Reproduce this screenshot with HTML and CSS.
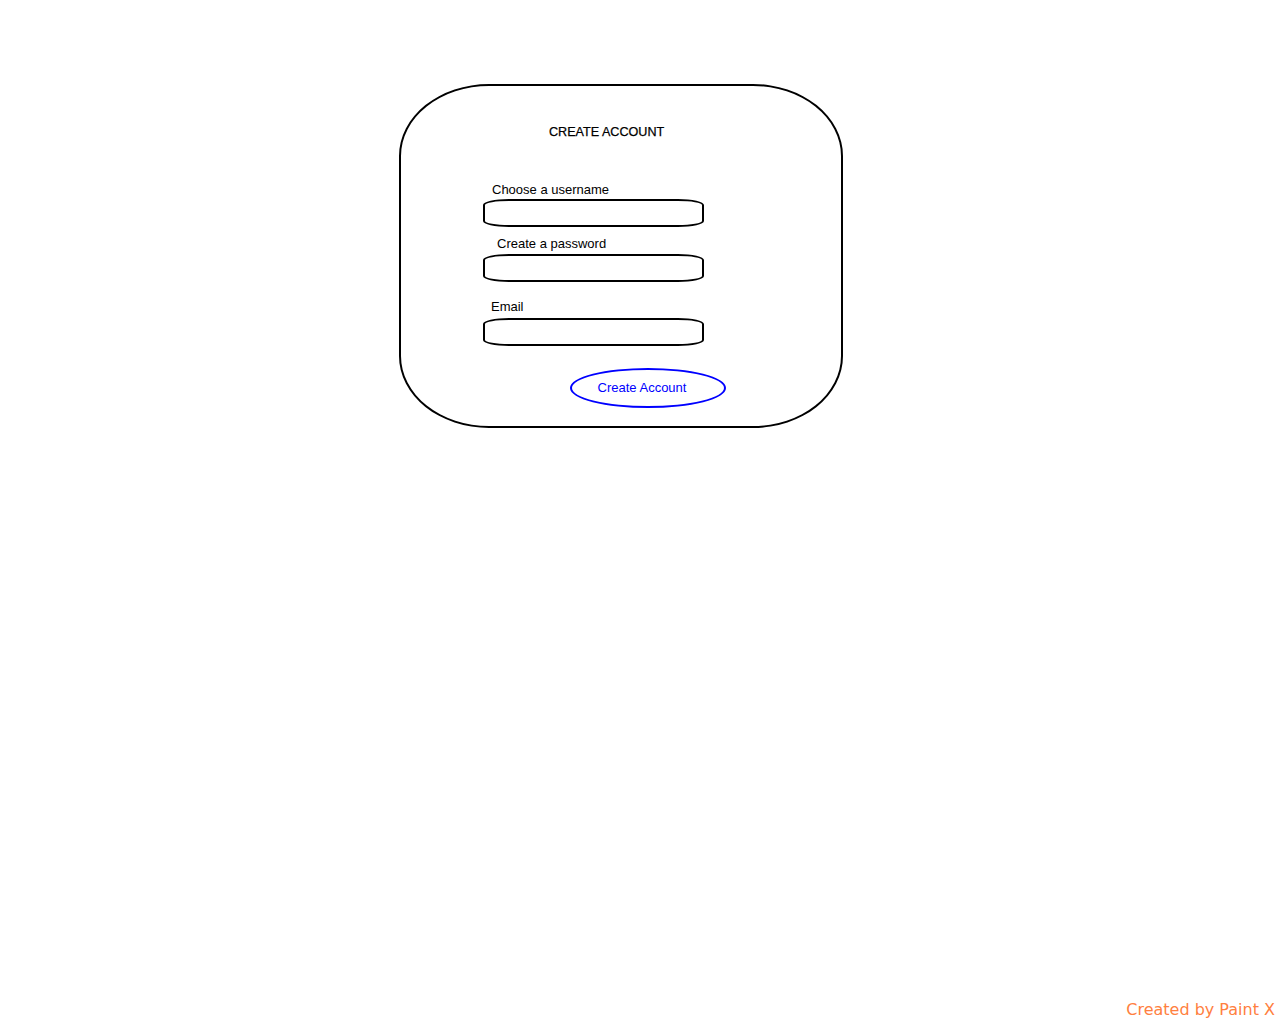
FILE: index.html
```html
<!DOCTYPE html>
<html>
<head>
<meta charset="utf-8">
<link rel="stylesheet" href="styles.css">
</head>
<body>
<div class="page">
  <form class="card">
    <div class="title">CREATE ACCOUNT</div>
    <div class="fields">
      <label class="label label-user">Choose a username</label>
      <div class="input"></div>
      <label class="label label-pass">Create a password</label>
      <div class="input"></div>
      <label class="label label-email">Email</label>
      <div class="input"></div>
    </div>
    <div class="actions">
      <div class="btn">Create Account</div>
    </div>
  </form>
</div>
<div class="footer">Created by Paint X</div>
</body>
</html>
```
FILE: styles.css
```css
html, body {
  margin: 0;
  padding: 0;
  background: #fff;
}
body {
  width: 1280px;
  height: 1024px;
  position: relative;
  font-family: "Liberation Sans", Arial, sans-serif;
  color: #000;
}
.page {
  padding: 84px 0 0 399px;
}
.card {
  box-sizing: border-box;
  width: 444px;
  height: 344px;
  border: 2px solid #000;
  border-radius: 90px / 72px;
  padding: 38px 0 0 82px;
  display: flex;
  flex-direction: column;
  margin: 0;
}
.title {
  font-size: 12.6px;
  line-height: 16px;
  margin-left: 66px;
  -webkit-text-stroke: 0.25px #000;
}
.fields {
  display: flex;
  flex-direction: column;
  margin-top: 41px;
}
.label {
  font-size: 13px;
  line-height: 16px;
  display: block;
  padding-top: 1px;
}
.label-user { padding-left: 9px; margin-bottom: 1px; }
.label-pass { padding-left: 14px; margin-top: 8px; margin-bottom: 2px; }
.label-email { padding-left: 8px; margin-top: 16px; margin-bottom: 3px; }
.input {
  box-sizing: border-box;
  width: 221px;
  height: 28px;
  border: 2px solid #000;
  border-radius: 26px / 6px;
}
.actions {
  margin-top: 22px;
  padding-left: 87px;
}
.btn {
  box-sizing: border-box;
  width: 156px;
  height: 40px;
  border: 2px solid #0000ff;
  border-radius: 50%;
  color: #0000ff;
  font-size: 13px;
  display: flex;
  align-items: center;
  justify-content: center;
  padding: 0 12px 2px 0;
}
.footer {
  position: absolute;
  right: 5px;
  bottom: 5px;
  font-family: "DejaVu Sans", Verdana, sans-serif;
  font-size: 16px;
  color: #ff8040;
}
```
